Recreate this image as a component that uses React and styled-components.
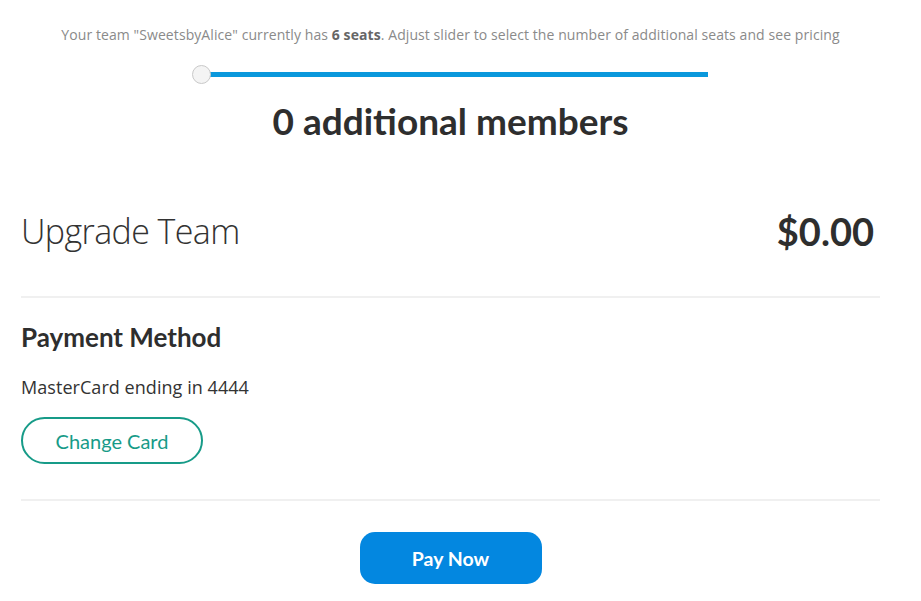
import React from 'react'
import styled, { createGlobalStyle } from 'styled-components'

const GlobalStyle = createGlobalStyle`
  html, body {
    margin: 0;
    padding: 0;
    background: #fff;
    font-family: 'Lato', 'Open Sans', sans-serif;
  }
`

const Page = styled.div`
  width: 921px;
  padding: 0 41px 0 21px;
  box-sizing: border-box;
`

const Intro = styled.p`
  margin: 0;
  padding-top: 26px;
  text-align: center;
  font-family: 'Open Sans', sans-serif;
  font-size: 14px;
  letter-spacing: 0.08px;
  color: #8a8a8a;
  line-height: 18px;
  b {
    font-weight: 700;
    color: #666;
  }
`

const SliderRow = styled.div`
  display: flex;
  justify-content: center;
  padding-top: 28px;
  padding-left: 8px;
`

const Track = styled.div`
  position: relative;
  width: 506px;
  height: 5px;
  background: #0a98dc;
`

const Thumb = styled.div`
  position: absolute;
  left: -10px;
  top: -7px;
  width: 17px;
  height: 17px;
  border-radius: 50%;
  background: #f4f4f4;
  border: 1px solid #c9c9c9;
`

const Members = styled.h2`
  margin: 22px 0 0;
  text-align: center;
  font-size: 37px;
  font-weight: 700;
  color: #2e2e2e;
  line-height: 44px;
`

const TotalRow = styled.div`
  display: flex;
  justify-content: space-between;
  align-items: center;
  margin-top: 66px;
  padding-bottom: 43px;
  padding-right: 6px;
  border-bottom: 2px solid #f0f0f0;
`

const TotalLabel = styled.div`
  font-family: 'Open Sans', sans-serif;
  font-weight: 300;
  font-size: 34px;
  letter-spacing: -0.6px;
  color: #333;
  line-height: 44px;
`

const TotalAmount = styled.div`
  font-size: 38px;
  font-weight: 700;
  color: #2e2e2e;
  line-height: 44px;
`

const Section = styled.div`
  padding-top: 24px;
  padding-bottom: 35px;
  border-bottom: 2px solid #f0f0f0;
`

const SectionTitle = styled.h3`
  margin: 0;
  font-size: 26px;
  font-weight: 700;
  color: #2e2e2e;
  line-height: 30px;
`

const CardText = styled.p`
  margin: 23px 0 0;
  font-family: 'Open Sans', sans-serif;
  font-size: 18px;
  letter-spacing: 0.05px;
  color: #333;
  line-height: 24px;
`

const Button = styled.button`
  display: flex;
  align-items: center;
  justify-content: center;
  width: 182px;
  box-sizing: border-box;
  font-family: 'Lato', sans-serif;
  cursor: pointer;
  ${({ primary }) =>
    primary
      ? `
    height: 52px;
    border: none;
    border-radius: 15px;
    background: #0387e0;
    color: #fff;
    font-size: 19.5px;
    font-weight: 700;
  `
      : `
    height: 47px;
    margin-top: 18px;
    border: 2px solid #179b88;
    border-radius: 24px;
    background: #fff;
    color: #179b88;
    font-size: 20px;
    font-weight: 400;
  `}
`

const Footer = styled.div`
  display: flex;
  justify-content: center;
  padding-top: 31px;
`

export default function App() {
  return (
    <>
      <GlobalStyle />
      <Page>
        <Intro>
          Your team "SweetsbyAlice" currently has <b>6 seats</b>. Adjust slider to select the number of additional seats and see pricing
        </Intro>
        <SliderRow>
          <Track>
            <Thumb />
          </Track>
        </SliderRow>
        <Members>0 additional members</Members>
        <TotalRow>
          <TotalLabel>Upgrade Team</TotalLabel>
          <TotalAmount>$0.00</TotalAmount>
        </TotalRow>
        <Section>
          <SectionTitle>Payment Method</SectionTitle>
          <CardText>MasterCard ending in 4444</CardText>
          <Button>Change Card</Button>
        </Section>
        <Footer>
          <Button primary>Pay Now</Button>
        </Footer>
      </Page>
    </>
  )
}
